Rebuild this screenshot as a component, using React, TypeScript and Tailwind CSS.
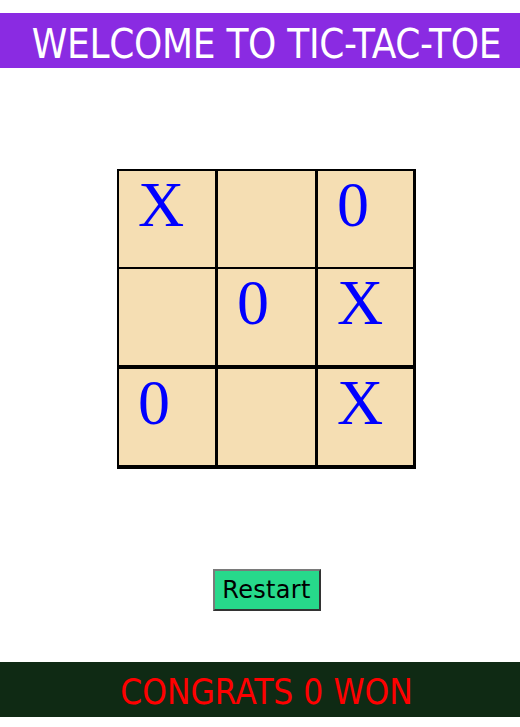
import React from "react";

const board = ["X", "", "0", "", "0", "X", "0", "", "X"];

const Cell = ({ value }: { value: string }) => {
    return (
        <div className="h-[96px] bg-[#f5deb3] pl-[19px] pt-[2px] text-[64px] leading-none text-[#0000ff] font-['Liberation_Serif',serif]">
            {value}
        </div>
    );
};

export default function App() {
    return (
        <div className="flex flex-col items-center w-full min-h-[727px] bg-white">
            {/* header */}
            <div className="mt-[13px] w-full h-[55px] bg-[#8a2be2] flex items-center justify-center pl-[13px] pt-[6px]">
                <h1 className="text-white text-[40px] leading-none tracking-[-0.3px] whitespace-nowrap font-stretch-condensed font-['DejaVu_Sans_Condensed','DejaVu_Sans',sans-serif]">
                    WELCOME TO TIC-TAC-TOE
                </h1>
            </div>

            {/* board */}
            <div className="ml-[13px] mt-[101px] grid grid-cols-[96px_97px_95px] grid-rows-[95px_97px_97px] gap-[3px] bg-black p-[2px] pr-[3px] pb-[3px]">
                {board.map((v, i) => (
                    <Cell key={i} value={v} />
                ))}
            </div>

            <button className="ml-[13px] mt-[100px] w-[108px] h-[42px] bg-[#27d98b] border-2 border-t-[#7a7a7a] border-l-[#7a7a7a] border-b-[#333] border-r-[#333] text-[24px] tracking-[0.3px] text-black font-['DejaVu_Sans',sans-serif]">
                Restart
            </button>

            {/* footer */}
            <div className="mt-[51px] w-full h-[55px] bg-[#0f2a14] flex items-center justify-center pl-[13px] pt-[6px]">
                <p className="text-[#ff0000] text-[35px] leading-none whitespace-nowrap font-extralight font-stretch-condensed font-['DejaVu_Sans_Condensed','DejaVu_Sans',sans-serif]">
                    CONGRATS 0 WON
                </p>
            </div>
        </div>
    );
}
